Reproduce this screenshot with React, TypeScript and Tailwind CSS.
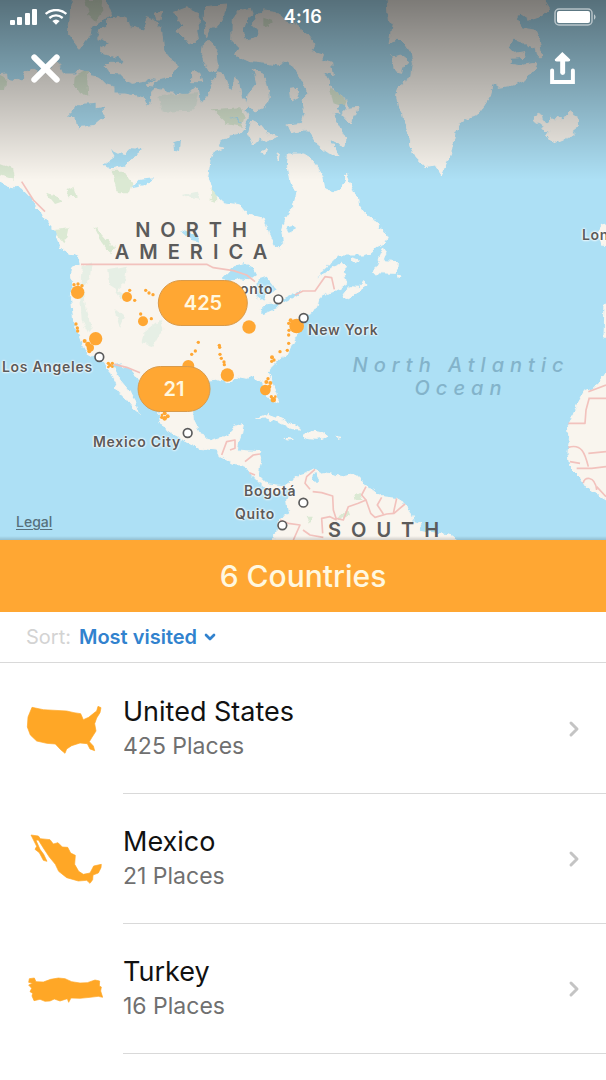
import { ChevronDown, ChevronRight } from "lucide-react";

const MAP_WIDTH = 606;
const MAP_HEIGHT = 540;

const place = (x: number, y: number) => ({
  left: `${(x / MAP_WIDTH) * 100}%`,
  top: `${(y / MAP_HEIGHT) * 100}%`,
});

// the map is drawn in units of a third of a pixel
const land = [
  // north america
  "M-20 225 20 222 22 238 45 242 70 238 80 215 100 208 130 225 150 210 165 185 180 200 190 222 225 222 235 208 260 215 275 230 300 235 320 255 345 262 345 282 375 282 415 290 430 295 440 320 455 300 455 275 470 262 500 278 530 280 560 285 580 265 595 265 600 300 610 305 625 285 635 255 650 215 670 220 680 250 695 275 705 230 715 240 725 300 735 300 745 320 735 330 745 350 735 380 720 400 690 405 660 420 655 440 670 445 640 455 630 480 622 540 648 590 670 608 720 615 745 645 790 655 805 700 820 735 835 747 850 730 845 690 855 655 880 620 890 580 870 545 862 500 865 462 909 462 930 475 950 500 968 530 974 565 1000 578 1030 565 1038 540 1036 522 1050 555 1060 575 1075 590 1080 620 1095 640 1120 660 1138 672 1130 685 1150 690 1162 710 1155 730 1130 740 1115 758 1090 765 1015 765 990 790 965 815 950 838 970 825 1000 800 1025 790 1040 800 1030 810 1035 830 1040 850 1020 865 1000 875 980 880 960 890 955 900 950 925 935 935 920 942 900 955 888 985 895 1000 875 1035 865 1060 835 1080 815 1100 805 1120 815 1145 828 1180 832 1205 820 1210 800 1185 788 1165 790 1148 775 1140 755 1128 740 1135 715 1130 700 1140 680 1148 650 1138 620 1140 600 1155 585 1180 577 1220 580 1260 595 1290 610 1310 630 1322 665 1312 690 1300 700 1280 730 1270 725 1300 715 1330 712 1350 735 1352 780 1355 785 1375 778 1400 775 1425 790 1440 805 1455 850 1460 880 1440 884 1460 850 1470 815 1475 790 1460 770 1440 750 1420 735 1400 690 1385 660 1370 650 1350 600 1345 560 1325 520 1305 490 1285 480 1260 478 1245 483 1230 470 1210 450 1190 430 1165 415 1140 400 1115 380 1100 350 1092 332 1092 345 1110 360 1140 385 1170 405 1200 418 1240 400 1225 380 1200 360 1180 345 1160 350 1150 335 1120 318 1100 310 1085 285 1072 262 1058 245 1030 235 1000 222 975 218 930 214 890 218 850 214 830 218 800 240 790 235 770 200 755 180 740 170 715 175 700 150 680 145 660 130 650 125 635 110 620 100 600 75 575 60 560 40 560 20 555 -20 535Z",
  // arctic islands
  "M215 -20 210 60 205 100 225 125 240 145 255 125 270 105 275 80 300 60 335 45 310 -20Z",
  "M320 60 355 45 385 60 390 80 430 90 440 65 435 50 455 55 470 70 485 90 490 140 500 170 535 195 520 215 500 235 475 240 450 235 430 245 400 250 375 240 365 222 330 220 315 200 330 190 370 190 375 180 330 165 305 160 305 140 330 130 290 115 300 90 320 85Z",
  "M465 35 485 35 480 60 470 60Z",
  "M520 35 560 20 590 35 600 60 590 90 595 120 570 135 550 110 525 95 545 80Z",
  "M615 20 680 15 670 50 655 75 630 85 620 110 612 60Z",
  "M610 130 630 120 650 150 655 190 645 215 615 195 605 175Z",
  "M575 210 600 220 605 245 575 245Z M435 255 470 240 460 258Z",
  "M695 120 697 60 720 30 755 25 760 45 740 60 730 90 735 120 770 112 775 95 755 75 770 50 790 30 830 35 850 60 880 70 909 90 945 135 935 155 970 165 965 180 995 190 1000 225 970 215 990 250 1000 275 1040 300 1045 325 1078 322 1070 345 1060 345 1050 372 1020 340 1000 335 1005 355 1020 385 1038 420 1030 440 1000 425 985 420 1005 445 1018 470 980 455 950 430 925 395 905 375 915 340 909 300 925 285 920 270 905 240 880 200 850 180 835 195 800 190 750 185 705 165 720 145Z",
  "M760 205 790 220 800 250 808 290 795 320 760 335 740 310 745 280 770 250Z",
  "M755 360 775 370 800 400 830 410 800 425 780 415 760 435 745 400Z",
  "M870 265 890 262 895 290 875 300Z M860 375 905 370 915 390 870 398Z M780 455 800 445 795 460Z M828 462 838 465 835 480Z M1040 520 1048 540 1036 545Z",
  // greenland
  "M1160 -20 1165 60 1180 70 1170 130 1195 115 1215 135 1235 165 1240 190 1235 230 1200 255 1190 285 1195 320 1210 340 1215 370 1225 400 1230 440 1245 470 1275 500 1305 495 1325 525 1340 490 1355 450 1365 400 1380 370 1410 350 1430 345 1450 320 1470 290 1480 250 1495 262 1540 255 1580 235 1600 210 1608 190 1570 195 1530 190 1532 175 1570 172 1575 155 1545 160 1525 140 1540 115 1570 125 1585 140 1605 145 1610 170 1625 170 1618 120 1605 90 1570 85 1550 55 1560 40 1590 60 1620 50 1650 30 1620 -20Z",
  "M1175 170 1205 165 1230 185 1210 195 1205 220 1185 215Z",
  // iceland
  "M1600 350 1615 340 1632 348 1622 360 1642 372 1655 352 1665 362 1675 350 1687 362 1710 335 1730 350 1735 375 1720 400 1690 420 1670 428 1635 410 1645 395 1622 385 1635 378 1605 365Z",
  // newfoundland, nova scotia
  "M1154 740 1159 755 1150 782 1192 785 1190 820 1118 818 1134 790 1144 760Z M1024 890 1049 860 1079 862 1094 845 1101 855 1074 875 1034 898Z M1050 775 1075 782 1070 788Z M1195 825 1203 828 1198 836Z",
  // west indies
  "M770 1255 805 1243 845 1258 880 1275 905 1287 875 1286 845 1270 800 1254Z M855 1315 880 1318 860 1320Z M909 1308 930 1293 969 1298 984 1310 949 1318 925 1316Z M1008 1313 1026 1315 1012 1318Z",
  // south america
  "M880 1440 900 1424 920 1418 945 1405 960 1420 975 1418 1000 1425 1030 1430 1060 1425 1080 1435 1095 1455 1120 1470 1145 1490 1190 1495 1215 1510 1232 1535 1240 1565 1265 1572 1255 1590 1310 1600 1350 1605 1400 1640 815 1640 825 1600 840 1555 865 1540 860 1500 872 1470Z",
  // western europe and africa
  "M1840 670 1805 678 1795 695 1805 735 1840 738Z M1840 905 1815 910 1812 1010 1840 1020Z M1840 1085 1804 1140 1779 1165 1754 1175 1734 1210 1719 1245 1704 1270 1709 1310 1704 1360 1709 1400 1739 1430 1759 1460 1789 1480 1840 1515Z",
];

const lakes = [
  "M205 340 240 312 290 308 290 325 312 320 310 350 280 375 235 382 230 355 205 350Z",
  "M310 495 345 470 330 445 370 465 395 445 430 447 400 470 380 495 330 507Z",
  "M520 430 543 422 540 450 522 447Z",
  "M395 562 415 540 460 535 430 555Z",
  "M665 840 690 815 705 795 735 790 755 800 768 825 750 838 720 835 690 843Z",
  "M770 840 800 830 830 870 800 880 790 905 770 890Z",
  "M782 930 800 912 845 908 830 925 790 942Z",
  "M845 900 875 885 900 870 895 885 860 905Z",
  "M860 680 880 675 888 688 868 698Z",
  "M540 690 560 695 590 708 598 725 575 720Z",
  "M938 1422 946 1420 955 1440 945 1450 936 1440Z",
  "M690 345 730 370 715 368Z M1010 325 1025 310 1040 325 1022 342Z",
];

const parks = [
  "M255 0 305 0 310 30 285 65 265 45Z",
  "M225 225 260 210 265 290 240 280 222 250Z",
  "M635 328 720 322 735 345 725 380 680 372Z",
  "M0 225 20 235 15 270 0 270Z",
  "M335 512 370 512 400 550 390 580 355 580Z",
  "M790 50 818 60 808 85 790 75Z",
  "M990 265 1040 300 1035 322 1000 310Z",
  "M0 490 40 505 45 540 0 525Z",
  "M138 578 165 585 185 605 165 612Z M200 570 220 560 230 590 205 592Z",
  "M165 690 205 685 200 710 190 730 170 705Z",
  "M280 682 300 695 345 745 330 760 300 720Z",
  "M635 565 650 580 648 605 632 600Z",
  "M1010 1555 1045 1530 1050 1545 1020 1560Z M1060 1485 1085 1478 1090 1500 1065 1500Z M920 1550 935 1550 930 1572Z",
];

const mountains = [
  "M475 285 595 280 580 332 485 335Z",
  "M245 800 275 790 270 830 250 860 258 920 275 980 265 1000 245 960 240 880Z",
  "M325 810 380 800 375 850 350 870 385 890 365 900 330 850Z",
  "M430 1000 480 960 490 985 460 1040 425 1030Z",
  "M340 920 375 950 360 985Z",
  "M548 585 590 575 600 600 560 592Z",
];

const borders = [
  "M243 793H620L640 803 700 812 740 825 765 845",
  "M885 885 909 873H945L975 830 995 833 1003 868",
  "M65 545 100 600 135 635",
  "M342 1093 380 1102 420 1118",
  "M665 1365 680 1325 705 1320 705 1345 690 1350 M735 1385 760 1365 780 1362 M748 1418 765 1425",
  "M945 1408 920 1430 915 1450 930 1468 M938 1475 965 1478 998 1488 1000 1530 1008 1555 1030 1560 1045 1520 1075 1510 1098 1500 1085 1485 1098 1460",
  "M1098 1500 1112 1540 1125 1552 1160 1542 1182 1540 1215 1512 M1145 1492 1132 1515 1150 1542 M1190 1495 1180 1540",
  "M968 1600 965 1555 990 1550 1010 1560 M909 1590 930 1605 970 1612 M840 1560 865 1570 900 1575 880 1620",
  "M1818 1155 1765 1175 M1765 1195H1818M1767 1197 1758 1230 1755 1270H1705",
  "M1705 1342C1745 1330 1755 1360 1765 1400M1765 1360 1818 1355M1710 1385 1740 1390M1730 1405 1775 1405 1818 1400M1750 1450C1750 1430 1785 1425 1790 1470M1790 1460 1818 1490",
];

// [x, y, radius]
const visits = [
  [233, 877, 20], [381, 891, 15], [429, 964, 15], [747, 981, 20], [287, 1016, 20],
  [890, 978, 22], [565, 1098, 18], [682, 1125, 20], [796, 1170, 16], [222, 854, 5],
  [234, 852, 5], [246, 857, 5], [389, 871, 5], [404, 901, 5], [437, 871, 5], [447, 879, 5],
  [459, 884, 5], [422, 942, 5], [454, 956, 5], [228, 972, 5], [232, 984, 5], [233, 993, 5],
  [254, 1023, 6], [264, 1033, 8], [271, 1043, 11], [268, 1054, 6], [595, 1027, 5],
  [586, 1053, 5], [575, 1063, 5], [658, 1036, 5], [659, 1042, 5], [660, 1063, 5],
  [664, 1075, 5], [672, 1086, 5], [673, 1094, 5], [866, 970, 5], [872, 961, 6], [867, 991, 5],
  [866, 1005, 5], [866, 1030, 5], [862, 1051, 5], [840, 1055, 5], [816, 1072, 6],
  [822, 1080, 5], [815, 1084, 5], [804, 1136, 5], [799, 1146, 6], [811, 1149, 6],
  [808, 1160, 6], [814, 1190, 5], [820, 1199, 8], [826, 1190, 4], [325, 1090, 5],
  [337, 1090, 5], [330, 1096, 5], [325, 1101, 4], [337, 1100, 4], [485, 1252, 5],
  [494, 1240, 6], [503, 1249, 6], [494, 1255, 7], [486, 1245, 4],
];

const cities = [
  [298, 1071], [835, 898], [911, 954], [563, 1299], [910, 1508], [847, 1576],
];

const cityLabels = [
  { name: "Toronto", x: 216, y: 289 },
  { name: "Los Angeles", x: 2, y: 367 },
  { name: "New York", x: 308, y: 330 },
  { name: "Mexico City", x: 93, y: 442 },
  { name: "Bogotá", x: 244, y: 491 },
  { name: "Quito", x: 235, y: 514 },
  { name: "London", x: 582, y: 235 },
];

const clusters = [
  { count: 425, x: 203, y: 303 },
  { count: 21, x: 174, y: 389 },
];

const countries = [
  {
    name: "United States",
    places: 425,
    shape:
      "M96 79 130 86 200 90 222 95 242 98 250 116 266 109 282 96 290 90 294 76 303 80 300 95 290 111 284 128 288 150 276 169 268 182 280 195 284 209 270 204 262 188 240 186 215 194 200 204 195 217 182 206 166 189 140 187 110 180 91 162 82 138 84 108Z",
  },
  {
    name: "Mexico",
    places: 21,
    shape:
      "M93 72 115 75 121 83 150 86 160 99 174 95 187 108 203 109 212 126 226 133 224 160 236 181 250 190 270 186 281 165 304 160 303 170 295 186 279 192 278 206 270 217 260 208 235 210 200 200 176 181 166 160 148 138 132 114 115 87 108 88 120 115 131 130 141 151 130 148 118 125 105 115 110 106Z",
  },
  {
    name: "Turkey",
    places: 16,
    shape:
      "M88 113 103 111 108 122 130 123 152 115 175 111 195 113 215 122 240 126 262 125 285 117 299 120 298 135 304 138 302 150 308 169 295 166 270 169 240 172 213 171 206 184 202 173 180 180 163 174 150 180 135 181 120 175 102 179 96 165 98 157 90 152 95 142 86 132 98 127 86 124Z",
  },
];

function StatusBar() {
  return (
    <div className="grid grid-cols-3 items-center px-[10px] pt-[6px] text-white">
      <div className="flex items-center gap-2">
        <svg viewBox="0 0 27 16" className="h-4 w-[27px]" fill="currentColor">
          <rect x="0" y="11" width="5" height="5" rx="1" />
          <rect x="7" y="8" width="5" height="8" rx="1" />
          <rect x="15" y="4" width="5" height="12" rx="1" />
          <rect x="22" y="0" width="5" height="16" rx="1" />
        </svg>
        <svg viewBox="0 0 66 48" className="h-4 w-[22px]" fill="none" stroke="currentColor" strokeWidth="7">
          <path d="M2 15C20-1 46-1 64 15M13 27C25 17 41 17 53 27" />
          <path d="M22 36C29 30 37 30 44 36L33 47Z" fill="currentColor" stroke="none" />
        </svg>
      </div>
      <span className="text-center text-lg leading-[22px] font-semibold tracking-wide">4:16</span>
      <svg viewBox="0 0 42 18" className="h-[18px] w-[42px] justify-self-end" fill="none">
        <rect x="1" y="1" width="37" height="16" rx="4" stroke="currentColor" strokeOpacity=".55" strokeWidth="1.5" />
        <rect x="3" y="3" width="33" height="12" rx="2" fill="currentColor" />
        <path d="M40 6.500C42 7 42 11 40 11.500Z" fill="currentColor" fillOpacity=".6" />
      </svg>
    </div>
  );
}

function MapDrawing() {
  return (
    <svg viewBox="0 0 1818 1620" className="block h-full w-full" aria-hidden="true">
      <defs>
        <filter id="coast" x="0" y="0" width="100%" height="100%">
          <feTurbulence type="fractalNoise" baseFrequency="0.05" numOctaves="2" seed="4" result="noise" />
          <feDisplacementMap in="SourceGraphic" in2="noise" scale="18" xChannelSelector="R" yChannelSelector="G" />
        </filter>
      </defs>
      <g filter="url(#coast)">
        <rect x="-40" y="-40" width="1900" height="1700" fill="#ade0f5" />
        <path d={land.join("")} fill="#f9f5ee" stroke="#f9f5ee" strokeWidth="3" strokeLinejoin="round" />
        <path d={parks.join("")} fill="#dbe9d3" />
        <path d={mountains.join("")} fill="#e6efe5" />
        <path d={lakes.join("")} fill="#ade0f5" />
      </g>
      <path d={borders.join("")} fill="none" stroke="#f2c2bd" strokeWidth="5" strokeLinejoin="round" />
      <g fill="#ffa733">
        {visits.map(([x, y, r]) => (
          <circle key={`${x}-${y}`} cx={x} cy={y} r={r} />
        ))}
      </g>
      <g fill="#fff" stroke="#5b5b5b" strokeWidth="5">
        {cities.map(([x, y]) => (
          <circle key={`${x}-${y}`} cx={x} cy={y} r="13" />
        ))}
      </g>
    </svg>
  );
}

function TravelMap() {
  return (
    <section className="relative aspect-[606/540] w-full overflow-hidden bg-[#ade0f5]">
      <MapDrawing />

      {cityLabels.map((city) => (
        <span
          key={city.name}
          style={place(city.x, city.y)}
          className="absolute -translate-y-1/2 text-sm leading-5 font-semibold tracking-wider whitespace-nowrap text-[#5b5b5b] [text-shadow:0_0_2px_#fff,0_0_2px_#fff,0_0_3px_#fff]"
        >
          {city.name}
        </span>
      ))}
      <span
        style={place(196, 241)}
        className="absolute -translate-x-1/2 -translate-y-1/2 text-center text-xl leading-[22px] font-semibold tracking-[0.5em] text-[#5b5b5b]"
      >
        NORTH
        <br />
        AMERICA
      </span>
      <span
        style={place(461, 377)}
        className="absolute -translate-x-1/2 -translate-y-1/2 text-center text-xl leading-[23px] font-medium tracking-[0.3em] whitespace-nowrap text-[#83b3ca] italic"
      >
        North Atlantic
        <br />
        Ocean
      </span>
      <span
        style={place(328, 530)}
        className="absolute -translate-y-1/2 text-xl leading-[22px] font-semibold tracking-[0.5em] text-[#5b5b5b]"
      >
        SOUTH
      </span>
      <a
        href="#legal"
        style={place(16, 522)}
        className="absolute -translate-y-1/2 text-sm leading-5 font-medium text-[#56707c] underline underline-offset-2"
      >
        Legal
      </a>

      {clusters.map((cluster) => (
        <button
          key={cluster.count}
          style={place(cluster.x, cluster.y)}
          className="absolute flex h-[46px] -translate-x-1/2 -translate-y-1/2 items-center rounded-full border border-[#d99a4a] bg-[#ffa733] px-[25px] text-xl font-semibold text-[#fff8e0]"
        >
          {cluster.count}
        </button>
      ))}

      <div className="absolute inset-x-0 bottom-0 h-1 bg-linear-to-b from-transparent to-black/15" />
      <div className="absolute inset-x-0 top-0 h-[180px] bg-linear-to-b from-black/50 to-transparent">
        <StatusBar />
        <div className="flex items-center justify-between px-[31px] pt-6 text-white">
          <button aria-label="Close" className="flex">
            <svg viewBox="0 0 88 88" className="h-[29px] w-[29px]" fill="none" stroke="currentColor" strokeWidth="18" strokeLinecap="round">
              <path d="M10 10 78 78M78 10 10 78" />
            </svg>
          </button>
          <button aria-label="Share" className="flex">
            <svg viewBox="0 0 75 97" className="h-8 w-[25px]" fill="none" stroke="currentColor" strokeWidth="12" strokeLinecap="round">
              <path d="M6 56V91H69V56" />
              <path d="M38 20V62" strokeWidth="15" />
              <path d="M37 0 61 23Q62 29 55 29H20Q13 29 14 23Z" fill="currentColor" stroke="none" />
            </svg>
          </button>
        </div>
      </div>
    </section>
  );
}

export default function App() {
  return (
    <main className="min-h-screen bg-white font-['Inter','Liberation_Sans',sans-serif]">
      <TravelMap />

      <h1 className="bg-[#ffa733] py-[18px] text-center text-3xl leading-9 font-medium text-[#fff8e0]">
        6 Countries
      </h1>

      <div className="flex h-[51px] items-center border-b border-[#d9d9d9] pl-[26px] text-xl">
        <label htmlFor="sort" className="text-[#d3d3d3]">
          Sort:
        </label>
        <div className="relative ml-2 flex items-center">
          <select id="sort" className="appearance-none bg-transparent pr-5 font-semibold text-[#3182ce]">
            <option>Most visited</option>
          </select>
          <ChevronDown className="pointer-events-none absolute right-0 h-4 w-4 text-[#3182ce]" strokeWidth={4} />
        </div>
      </div>

      <ul className="pt-px">
        {countries.map((country) => (
          <li key={country.name}>
            <a href={`#${country.name}`} className="flex items-center gap-5 pl-[26px]">
              <svg viewBox="78 66 231 156" className="h-[52px] w-[77px] shrink-0" fill="#ffa726">
                <path d={country.shape} stroke="#ffa726" strokeWidth="2" strokeLinejoin="round" />
              </svg>
              <div className="flex flex-1 items-center justify-between border-b border-[#d9d9d9] py-[30px] pr-5">
                <div>
                  <h2 className="text-[27px] leading-9 text-[#111]">{country.name}</h2>
                  <p className="text-[23px] leading-[33px] text-[#707070]">{country.places} Places</p>
                </div>
                <ChevronRight className="h-6 w-6 text-[#c4c4c4]" strokeWidth={3} />
              </div>
            </a>
          </li>
        ))}
      </ul>
    </main>
  );
}
